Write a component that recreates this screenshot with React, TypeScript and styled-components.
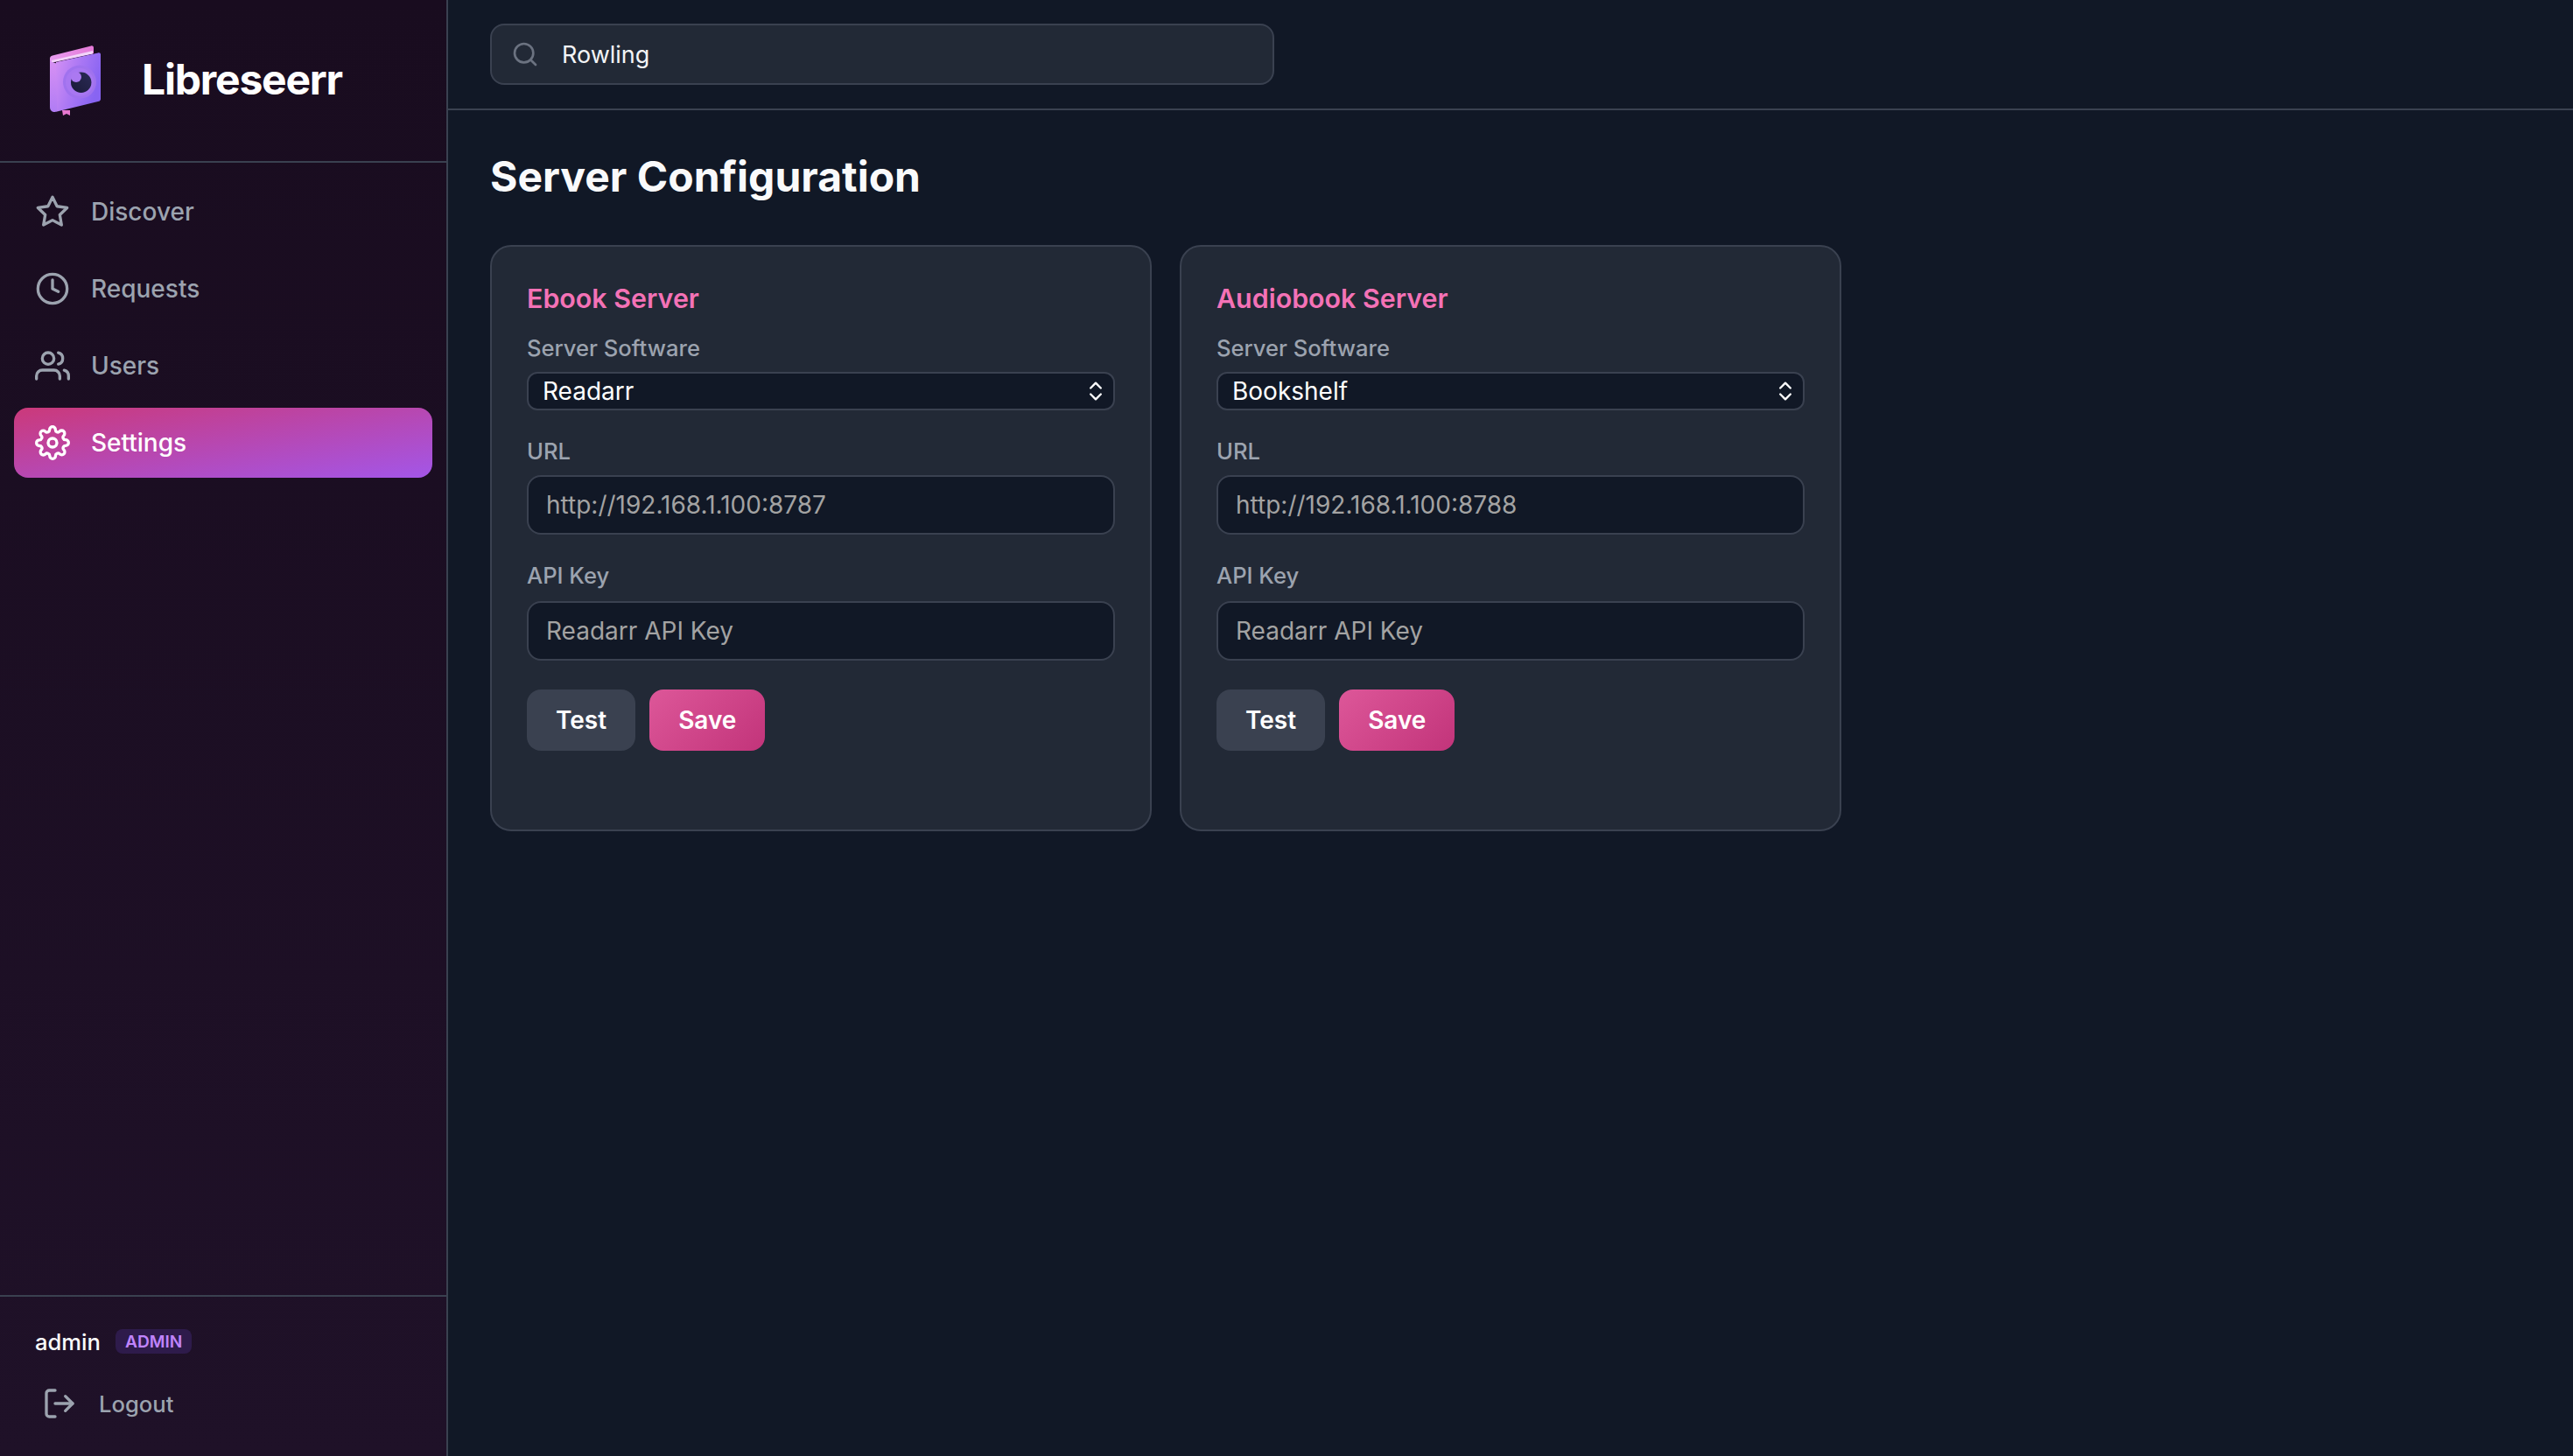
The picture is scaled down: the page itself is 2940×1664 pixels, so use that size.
import React from 'react';
import styled, { createGlobalStyle } from 'styled-components';
import { ChevronsUpDown } from 'lucide-react';
import { FiClock, FiLogOut, FiSearch, FiSettings, FiStar, FiUsers } from 'react-icons/fi';

const GlobalStyle = createGlobalStyle`
  * { box-sizing: border-box; }
  html, body { margin: 0; padding: 0; }
  body {
    background: #111826;
    font-family: Inter, "Noto Sans", sans-serif;
    color: #f3f4f6;
  }
`;

const Layout = styled.div`
  display: flex;
  height: 100vh;
  overflow: hidden;
`;

const Sidebar = styled.aside`
  width: 512px;
  flex-shrink: 0;
  display: flex;
  flex-direction: column;
  background: linear-gradient(180deg, #190c1f 0%, #1f1128 100%);
  border-right: 2px solid #3a4150;
`;

const Brand = styled.div`
  height: 186px;
  display: flex;
  align-items: center;
  gap: 42px;
  padding-left: 52px;
  border-bottom: 2px solid #3a4150;
`;

const BrandName = styled.span`
  font-size: 48px;
  line-height: 64px;
  font-weight: 700;
  letter-spacing: -0.025em;
  color: #fff;
  margin-top: -3px;
`;

const Nav = styled.nav`
  display: flex;
  flex-direction: column;
  gap: 8px;
  padding: 16px;
`;

const NavItem = styled.a<{ $active?: boolean }>`
  height: 80px;
  display: flex;
  align-items: center;
  gap: 24px;
  padding-left: 24px;
  border-radius: 16px;
  font-size: 28px;
  font-weight: 500;
  color: ${(p) => (p.$active ? '#fff' : '#9ca3af')};
  background: ${(p) => (p.$active ? 'linear-gradient(to bottom right, #cb397a 0%, #a356e8 100%)' : 'transparent')};
`;

const SidebarFooter = styled.div`
  margin-top: auto;
  height: 184px;
  padding: 37px 40px 0;
  border-top: 2px solid #3a4150;
`;

const UserRow = styled.div`
  display: flex;
  align-items: center;
  gap: 17px;
  height: 28px;
`;

const UserName = styled.span`
  font-size: 25.6px;
  font-weight: 500;
  color: #f9fafb;
`;

const RoleBadge = styled.span`
  height: 28px;
  display: flex;
  align-items: center;
  padding: 0 11px;
  border-radius: 8px;
  background: #2e1b4b;
  color: #c084fc;
  font-size: 19.2px;
  font-weight: 600;
`;

const LogoutButton = styled.button`
  display: flex;
  align-items: center;
  gap: 25px;
  margin-top: 37px;
  padding: 0 0 0 8px;
  height: 40px;
  border: 0;
  background: none;
  color: #9ca3af;
  font: 500 25.6px Inter, sans-serif;
`;

const Main = styled.main`
  flex: 1;
  min-width: 0;
  display: flex;
  flex-direction: column;
`;

const TopBar = styled.header`
  height: 126px;
  flex-shrink: 0;
  display: flex;
  align-items: center;
  padding: 0 48px;
  border-bottom: 2px solid #3a4150;
`;

const SearchBox = styled.div`
  position: relative;
  width: 896px;
  height: 70px;
`;

const SearchIcon = styled(FiSearch)`
  position: absolute;
  left: 24px;
  top: 19px;
  color: #6b7280;
`;

const SearchInput = styled.input`
  width: 100%;
  height: 100%;
  padding: 0 20px 0 80px;
  border: 2px solid #3a4150;
  border-radius: 16px;
  outline: none;
  background: #222936;
  color: #f3f4f6;
  font: 400 27px Inter, sans-serif;
`;

const Content = styled.div`
  padding: 40px 48px;
`;

const PageTitle = styled.h1`
  margin: 0 0 42px;
  font-size: 48px;
  line-height: 72px;
  font-weight: 700;
  color: #f9fafb;
`;

const CardGrid = styled.div`
  display: grid;
  grid-template-columns: repeat(3, 1fr);
  gap: 32px;
`;

const Card = styled.section`
  height: 670px;
  padding: 40px;
  border: 2px solid #3a4150;
  border-radius: 24px;
  background: #222936;
`;

const CardTitle = styled.h2`
  margin: 0 0 21px;
  font-size: 30.4px;
  line-height: 38px;
  font-weight: 600;
  color: #f472b6;
`;

const Field = styled.div`
  margin-bottom: 30px;
`;

const FieldLabel = styled.label<{ $gap?: number }>`
  display: block;
  margin-bottom: ${(p) => p.$gap ?? 10}px;
  font-size: 25.6px;
  line-height: 34px;
  font-weight: 500;
  color: #9ca3af;
`;

const SelectWrap = styled.div`
  position: relative;
  height: 44px;
`;

const Select = styled.select`
  appearance: none;
  width: 100%;
  height: 100%;
  padding: 0 40px 0 16px;
  border: 2px solid #3a4150;
  border-radius: 12px;
  outline: none;
  background: #111826;
  color: #fff;
  font: 400 28px Inter, sans-serif;
`;

const SelectArrows = styled(ChevronsUpDown)`
  position: absolute;
  right: 8px;
  top: 8px;
  color: #fff;
  pointer-events: none;
`;

const TextInput = styled.input`
  width: 100%;
  height: 68px;
  padding: 0 20px;
  border: 2px solid #3a4150;
  border-radius: 16px;
  outline: none;
  background: #111826;
  color: #f3f4f6;
  font: 400 28px Inter, sans-serif;

  &::placeholder {
    color: #a3a3a3;
    opacity: 1;
  }
`;

const Actions = styled.div`
  display: flex;
  gap: 16px;
  margin-top: 33px;
`;

const Button = styled.button<{ $primary?: boolean }>`
  height: 70px;
  padding: 0 33px;
  border: 0;
  border-radius: 16px;
  color: #fff;
  background: ${(p) => (p.$primary ? 'linear-gradient(135deg, #dd5799 0%, #c2347a 100%)' : '#3a4150')};
  font: 600 28px Inter, sans-serif;
`;

const Logo = () => (
  <svg width="68" height="90" viewBox="52 46 68 90" aria-hidden="true">
    <defs>
      <linearGradient id="cover" x1="0" y1="0" x2="1" y2="0.4">
        <stop offset="0" stopColor="#d792f4" />
        <stop offset="0.5" stopColor="#ad79f4" />
        <stop offset="1" stopColor="#8864f2" />
      </linearGradient>
      <linearGradient id="spine" x1="0" y1="0" x2="0" y2="1">
        <stop offset="0" stopColor="#d991f3" />
        <stop offset="1" stopColor="#b07cf5" />
      </linearGradient>
      <linearGradient id="pages" x1="0" y1="0" x2="1" y2="0">
        <stop offset="0" stopColor="#e79cf0" />
        <stop offset="1" stopColor="#e67ad8" />
      </linearGradient>
      <linearGradient id="pupil" x1="0" y1="1" x2="1" y2="0">
        <stop offset="0" stopColor="#1a1a38" />
        <stop offset="1" stopColor="#2b2a55" />
      </linearGradient>
    </defs>
    <path d="M71 125h9v6l-4-2-4 2z" fill="#e878d0" />
    <path d="M57 66c0-2 1-3 3-3.600l44-11c2-.4 3 .4 3 2.600v6l-50 11z" fill="url(#pages)" />
    <path d="M59 68l47-11v3.500l-47 10z" fill="#f3d4fa" />
    <path d="M57 66v55c0 4 2 6 6 6l3-2V72l-6-2c-2-.5-3-2-3-4z" fill="url(#spine)" />
    <path d="M64 70l48-10.600c2-.4 3 .4 3 2V112c0 1.500-.8 2.400-2 2.800l-50 12.200c1.500-1 2-2 2-4z" fill="url(#cover)" />
    <circle cx="91" cy="92.700" r="19" fill="#a072ee" />
    <circle cx="91" cy="92.700" r="16" fill="#a877f1" />
    <circle cx="92.700" cy="93.300" r="11.700" fill="url(#pupil)" />
    <circle cx="87" cy="87" r="6" fill="#ab79f1" />
  </svg>
);

const servers = [
  { title: 'Ebook Server', software: 'Readarr', url: 'http://192.168.1.100:8787' },
  { title: 'Audiobook Server', software: 'Bookshelf', url: 'http://192.168.1.100:8788' },
];

const navItems = [
  { label: 'Discover', Icon: FiStar },
  { label: 'Requests', Icon: FiClock },
  { label: 'Users', Icon: FiUsers },
  { label: 'Settings', Icon: FiSettings, active: true },
];

export default function App() {
  return (
    <Layout>
      <GlobalStyle />
      <Sidebar>
        <Brand>
          <Logo />
          <BrandName>Libreseerr</BrandName>
        </Brand>
        <Nav>
          {navItems.map(({ label, Icon, active }) => (
            <NavItem key={label} $active={active}>
              <Icon size={40} />
              {label}
            </NavItem>
          ))}
        </Nav>
        <SidebarFooter>
          <UserRow>
            <UserName>admin</UserName>
            <RoleBadge>ADMIN</RoleBadge>
          </UserRow>
          <LogoutButton>
            <FiLogOut size={40} />
            Logout
          </LogoutButton>
        </SidebarFooter>
      </Sidebar>
      <Main>
        <TopBar>
          <SearchBox>
            <SearchIcon size={32} />
            <SearchInput defaultValue="Rowling" />
          </SearchBox>
        </TopBar>
        <Content>
          <PageTitle>Server Configuration</PageTitle>
          <CardGrid>
            {servers.map((s) => (
              <Card key={s.title}>
                <CardTitle>{s.title}</CardTitle>
                <Field>
                  <FieldLabel>Server Software</FieldLabel>
                  <SelectWrap>
                    <Select defaultValue={s.software}>
                      <option>Readarr</option>
                      <option>Bookshelf</option>
                    </Select>
                    <SelectArrows size={28} />
                  </SelectWrap>
                </Field>
                <Field>
                  <FieldLabel>URL</FieldLabel>
                  <TextInput placeholder={s.url} />
                </Field>
                <Field>
                  <FieldLabel $gap={12}>API Key</FieldLabel>
                  <TextInput placeholder="Readarr API Key" />
                </Field>
                <Actions>
                  <Button>Test</Button>
                  <Button $primary>Save</Button>
                </Actions>
              </Card>
            ))}
          </CardGrid>
        </Content>
      </Main>
    </Layout>
  );
}
